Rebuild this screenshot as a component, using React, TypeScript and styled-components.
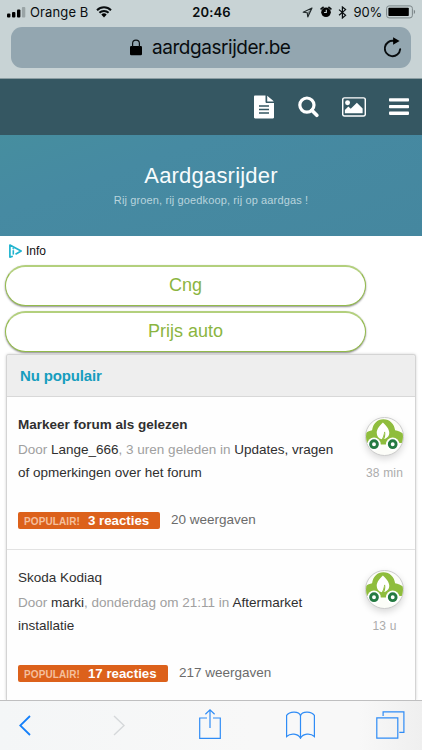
import React from 'react';
import styled, { createGlobalStyle } from 'styled-components';

const Global = createGlobalStyle`
  * { box-sizing: border-box; }
  html, body { margin: 0; padding: 0; background: #fff; }
  body { font-family: "Liberation Sans", Arial, sans-serif; overflow: hidden; }
  svg { display: block; flex: none; }
`;

const Phone = styled.div`
  width: 422px;
  height: 750px;
  display: flex;
  flex-direction: column;
  overflow: hidden;
  background: #fff;
`;

const BrowserTop = styled.header`
  flex: none;
  height: 79px;
  background: #c8d3d5;
  border-bottom: 1px solid #8b9da2;
  font-family: Inter, sans-serif;
  color: #090d0f;
`;

const StatusBar = styled.div`
  height: 27px;
  padding: 0 6px 3px 7px;
  display: grid;
  grid-template-columns: 1fr auto 1fr;
  align-items: center;
`;

const StatusSide = styled.div<{ $end?: boolean }>`
  display: flex;
  align-items: center;
  justify-content: ${p => (p.$end ? 'flex-end' : 'flex-start')};
`;

const StatusText = styled.span<{ $bold?: boolean; $spacing?: number }>`
  font-size: 13px;
  line-height: 16px;
  font-weight: ${p => (p.$bold ? 600 : 400)};
  letter-spacing: ${p => p.$spacing ?? 0}px;
  white-space: nowrap;
`;

const Gap = styled.span<{ $w: number }>`
  flex: none;
  width: ${p => p.$w}px;
`;

const AddressBar = styled.div`
  height: 41px;
  margin: 0 11px;
  padding: 0 9px 0 119px;
  border-radius: 11px;
  background: #93a6b0;
  display: flex;
  align-items: center;
`;

const Address = styled.span`
  flex: 1;
  margin-left: 10px;
  font-size: 19px;
  line-height: 24px;
  letter-spacing: -0.45px;
`;

const SiteNav = styled.nav`
  flex: none;
  height: 56px;
  padding: 0 13px 0 254px;
  background: #355762;
  display: flex;
  align-items: center;
  justify-content: space-between;
`;

const Hero = styled.section`
  flex: none;
  height: 101px;
  padding-top: 27px;
  background: linear-gradient(160deg, #468e9f 0%, #468aa2 30%, #45879f 100%);
  text-align: center;
`;

const SiteTitle = styled.h1`
  margin: 0;
  font-size: 22px;
  line-height: 27px;
  font-weight: 400;
  letter-spacing: 0.2px;
  color: #f8fcfd;
`;

const Tagline = styled.p`
  margin: 4px 0 0;
  font-size: 11px;
  line-height: 15px;
  letter-spacing: 0.13px;
  color: #b9d4dd;
`;

const AdBlock = styled.section`
  flex: none;
  height: 118px;
  padding: 0 0 0 5px;
`;

const AdInfo = styled.div`
  height: 29px;
  padding: 1px 0 0 4px;
  display: flex;
  align-items: center;
  gap: 4px;
  font-size: 12px;
  color: #111;
`;

const AdLink = styled.div`
  width: 361px;
  height: 41px;
  margin-bottom: 5px;
  border: 1px solid #93bb4b;
  border-width: 2px 1px 1px;
  border-top-color: #b3d07d;
  border-radius: 21px;
  box-shadow: 0 1px 2px rgba(0, 0, 0, 0.45);
  background: #fff;
  color: #8bb53f;
  font-size: 18px;
  line-height: 37px;
  text-align: center;
`;

const Card = styled.section`
  flex: 1;
  min-height: 0;
  overflow: hidden;
  margin: 0 6px 0 6px;
  border: 1px solid #d4d4d4;
  border-bottom: 0;
  border-radius: 3px 3px 0 0;
  box-shadow: 0 0 3px rgba(0, 0, 0, 0.18);
  background: #fefefe;
`;

const CardTitle = styled.h2`
  margin: 0;
  height: 42px;
  padding-left: 13px;
  border-bottom: 1px solid #d8d8d8;
  background: #eee;
  font-size: 15px;
  line-height: 42px;
  letter-spacing: -0.15px;
  color: #169dbe;
`;

const Topic = styled.article`
  height: 153px;
  padding: 17px 0 0 11px;
  display: grid;
  grid-template-columns: 330px 1fr;
  border-bottom: 1px solid #e2e2e2;
`;

const TopicTitle = styled.h3<{ $unread?: boolean }>`
  margin: 0 0 3px;
  font-size: 13.5px;
  line-height: 22px;
  font-weight: ${p => (p.$unread ? 700 : 400)};
  color: #303030;
`;

const Meta = styled.p`
  margin: 0;
  font-size: 13.5px;
  line-height: 22.5px;
  color: #a0a0a0;
  white-space: nowrap;
`;

const MetaLink = styled.span`
  color: #2f2f2f;
`;

const Stats = styled.div`
  margin-top: 28px;
  display: flex;
  align-items: center;
  gap: 11px;
  font-size: 13.5px;
  line-height: 17px;
  color: #6b6b6b;
`;

const Badge = styled.span<{ $w: number }>`
  width: ${p => p.$w}px;
  height: 17px;
  padding-left: 6px;
  border-radius: 2px;
  background: #dc611b;
  display: flex;
  align-items: baseline;
  gap: 8px;
  font-size: 13.3px;
  font-weight: 700;
  white-space: nowrap;
  color: #fff;
`;

const BadgeLabel = styled.span`
  font-size: 10px;
  letter-spacing: 0.1px;
  color: #f4bf9d;
`;

const Views = styled.span`
  margin-top: -2px;
`;

const Author = styled.div`
  padding: 3px 0 0 17px;
  width: 56px;
`;

const Avatar = styled.div`
  width: 39px;
  height: 39px;
  border: 1px solid #ccc;
  border-radius: 50%;
  overflow: hidden;
  background: #fcfdf8;
  box-shadow: 0 3px 7px rgba(0, 0, 0, 0.15);
`;

const Age = styled.div`
  width: 39px;
  margin-top: 9px;
  font-size: 12px;
  line-height: 16px;
  text-align: center;
  white-space: nowrap;
  letter-spacing: 0.2px;
  color: #acacac;
`;

const Toolbar = styled.footer`
  flex: none;
  height: 50px;
  padding: 0 17px 1px 19px;
  border-top: 1px solid #bfbfc0;
  background: linear-gradient(90deg, #f4f6f7 0%, #f8f8f8 60%, #f8f8f8 85%, #efefef 100%);
  display: flex;
  align-items: center;
`;

const Signal = () => (
  <svg width="19" height="12" viewBox="0 0 19 12">
    <rect x="0" y="7.4" width="3.4" height="4.2" rx="1" />
    <rect x="5" y="5.9" width="3.4" height="5.7" rx="1" />
    <rect x="10" y="3.6" width="3.4" height="8" rx="1" />
    <rect x="14.9" y="1" width="3.4" height="10.6" rx="1" fill="#9aa4a6" />
  </svg>
);

const Wifi = () => (
  <svg width="16" height="12" viewBox="0 0 16 12">
    <path d="M1 4.2a10 10 0 0 1 14 0M3.4 6.8a6.5 6.5 0 0 1 9.2 0" fill="none" stroke="currentColor" strokeWidth="2" />
    <path d="M5.3 8.6a3.8 3.8 0 0 1 5.4 0L8 11.4Z" />
  </svg>
);

const LocationArrow = () => (
  <svg width="11" height="11" viewBox="0 0 11 11">
    <path d="M10 1 1.2 5.3l4 .5.6 4.2L10 1Z" fill="none" stroke="#20282a" strokeWidth="1.1" strokeLinejoin="round" />
    <path d="M10 1 5.2 5.8l.6 4.2Z" fill="#20282a" opacity=".45" />
  </svg>
);

const Alarm = () => (
  <svg width="12" height="12" viewBox="0 0 12 12">
    <circle cx="6" cy="6.3" r="4.8" />
    <path d="M1.2 2.9 3 1.4M10.8 2.9 9 1.4" stroke="currentColor" strokeWidth="1.8" strokeLinecap="round" />
    <path d="M6.3 3.7v2.8H4.1" fill="none" stroke="#c8d3d5" strokeWidth="1.1" />
  </svg>
);

const Bluetooth = () => (
  <svg width="9" height="13" viewBox="0 0 9 13">
    <path d="m1 3.6 6.6 5.7-3.2 2.7V1l3.2 2.6L1 9.3" fill="none" stroke="currentColor" strokeWidth="1.2" />
  </svg>
);

const Battery = () => (
  <svg width="30" height="14" viewBox="0 0 30 14">
    <rect x=".6" y=".9" width="25.8" height="12" rx="2.5" fill="none" stroke="#7b8588" />
    <rect x="2.4" y="2.7" width="20.4" height="8.4" rx=".8" />
    <path d="M27.8 4.8c1.8.6 1.8 3.6 0 4.2Z" fill="#7b8588" />
  </svg>
);

const Lock = () => (
  <svg width="12" height="17" viewBox="0 0 12 17">
    <rect x="0" y="7" width="12" height="9.2" rx="1.3" />
    <path d="M2.6 8V4.5a3.4 3.4 0 0 1 6.8 0V8" fill="none" stroke="currentColor" strokeWidth="1.2" />
  </svg>
);

const Reload = () => (
  <svg width="18" height="21" viewBox="0 0 18 21">
    <path d="M10.2 4A7.7 7.7 0 1 0 16.2 12.2" fill="none" stroke="currentColor" strokeWidth="1.9" strokeLinecap="round" />
    <path d="m9.1.3 6.5 3.8-6.5 3.6Z" />
  </svg>
);

const DocumentIcon = () => (
  <svg width="20" height="24" viewBox="0 0 20 24" fill="#fff">
    <path d="M1.2.6h10.3v6.1c0 .9.5 1.3 1.3 1.3H20v14.2c0 .8-.4 1.2-1.2 1.2H1.2C.4 23.4 0 23 0 22.2V1.8C0 1 .4.6 1.2.6Z" />
    <path d="M13.2.8c.3.1.6.3.9.6l4.8 4.2c.4.4.6.6.7 1h-6.4Z" />
    <path d="M5 11.1h10M5 14.5h10M5 17.9h10" stroke="#355762" strokeWidth="1.5" />
  </svg>
);

const SearchIcon = () => (
  <svg width="22" height="22" viewBox="-1 0 22 22">
    <circle cx="8.9" cy="9.1" r="7.1" fill="none" stroke="#fff" strokeWidth="3.2" />
    <path d="m13.8 14.3 5 5" stroke="#fff" strokeWidth="3.6" strokeLinecap="round" />
  </svg>
);

const PictureIcon = () => (
  <svg width="24" height="20" viewBox="0.3 0 24.2 20">
    <rect x="1" y=".8" width="22.8" height="18.2" rx="1.8" fill="none" stroke="#fff" strokeWidth="1.5" />
    <circle cx="5.9" cy="5.8" r="2.5" fill="#fff" />
    <path d="M3.2 16.2v-3.1l3.5-3.5 2.4 2.2 6.2-6.2 5.8 5.8v4.8Z" fill="#fff" />
  </svg>
);

const MenuIcon = () => (
  <svg width="20" height="18" viewBox="0 0 20 18" fill="#fff">
    <rect y=".3" width="20" height="3.3" rx=".8" />
    <rect y="7" width="20" height="3.3" rx=".8" />
    <rect y="13.6" width="20" height="3.3" rx=".8" />
  </svg>
);

const AdChoices = () => (
  <svg width="13" height="14" viewBox="0 0 13 14" fill="none" stroke="#20b4cf">
    <path d="M3.8 12.2.9 13.1V1l11.2 6-5.6 3.3" strokeWidth="1.7" strokeLinejoin="round" />
    <path d="M4.3 6.2v4.4" strokeWidth="1.6" />
    <circle cx="4.3" cy="4.6" r=".6" fill="#20b4cf" strokeWidth=".5" />
  </svg>
);

const CarLogo = () => (
  <svg width="37" height="37" viewBox="0 0 37 37">
    <path d="M-1 25v-9.5c1.3-1.4 4.2-2.8 7.1-3.3C7 6 11 1.3 17.4 1.3S28.2 6 29.1 12.2c3.5.5 6.6 2 8.9 4.2V25H-1Z" fill="#8fbd3d" />
    <path d="M13.4 21.4h8L20 26.6h-6Z" fill="#8fbd3d" />
    <path d="M16.9 4.4c-3.4 3.6-6.2 6.6-6.2 10.3 0 3.3 1.8 5.8 5.1 6.6 1.2-2 1.8-3.9 2.1-6 .6 2-.1 4-.5 5.8 3.4-.4 5.9-2.9 5.9-6.4 0-3.7-3-6.7-6.4-10.3Z" fill="#fff" />
    <path d="M18.6 13.8c.7 3.3-.3 6.7-2.6 9.7" fill="none" stroke="#8fbd3d" strokeWidth="1.1" />
    <g fill="#fff">
      <circle cx="8" cy="26.2" r="6.7" />
      <circle cx="26.7" cy="26.2" r="6.7" />
    </g>
    <g fill="#fff" stroke="#247a42" strokeWidth="2.9">
      <circle cx="8" cy="26.2" r="3.4" />
      <circle cx="26.7" cy="26.2" r="3.4" />
    </g>
  </svg>
);

const Chevron = ({ forward = false }: { forward?: boolean }) => (
  <svg width="12" height="21" viewBox="0 0 12 21">
    <path
      d={forward ? 'm1 1 10 9.5L1 20' : 'M11 1 1.2 10.5 11 20'}
      fill="none"
      stroke={forward ? '#d5d8da' : '#1580fa'}
      strokeWidth={forward ? 1.4 : 1.8}
    />
  </svg>
);

const Share = () => (
  <svg width="22" height="32" viewBox="0 0 22 32" fill="none" stroke="#2f8cf6" strokeWidth="1.2">
    <path d="M8 9H.7v20.3h20.6V9H14M11 19V.9M6.4 5.2 11 .9l4.6 4.3" />
  </svg>
);

const Book = () => (
  <svg width="29" height="28" viewBox="0 0 29 28" fill="none" stroke="#2f8cf6" strokeWidth="1.2">
    <path d="M14.5 4.8C13 .1 3.8-.1.6 4.4v21.1c3.8-3.6 11.5-3.2 13.9 1.7 2.4-4.9 10.1-5.3 13.9-1.7V4.4C25.2-.1 16 .1 14.5 4.8v22.4" />
  </svg>
);

const Tabs = () => (
  <svg width="29" height="28" viewBox="0 0 29 28" fill="none" stroke="#2f8cf6" strokeWidth="1.2">
    <path d="M.8 6.8h21v20.4H.8ZM7.1 5V.8h20.8v20.5h-4.6" />
  </svg>
);

type TopicRowProps = {
  title: string;
  unread?: boolean;
  meta: React.ReactNode;
  replies: string;
  badgeWidth: number;
  views: string;
  age: string;
};

const TopicRow = ({ title, unread, meta, replies, badgeWidth, views, age }: TopicRowProps) => (
  <Topic>
    <div>
      <TopicTitle $unread={unread}>{title}</TopicTitle>
      <Meta>{meta}</Meta>
      <Stats>
        <Badge $w={badgeWidth}>
          <BadgeLabel>POPULAIR!</BadgeLabel>
          {replies}
        </Badge>
        <Views>{views}</Views>
      </Stats>
    </div>
    <Author>
      <Avatar><CarLogo /></Avatar>
      <Age>{age}</Age>
    </Author>
  </Topic>
);

export default function App() {
  return (
    <Phone>
      <Global />
      <BrowserTop>
        <StatusBar>
          <StatusSide>
            <Signal />
            <Gap $w={4} />
            <StatusText $spacing={0.12}>Orange B</StatusText>
            <Gap $w={7} />
            <Wifi />
          </StatusSide>
          <StatusText $bold $spacing={0.15}>20:46</StatusText>
          <StatusSide $end>
            <LocationArrow />
            <Gap $w={7} />
            <Alarm />
            <Gap $w={6} />
            <Bluetooth />
            <Gap $w={7} />
            <StatusText $spacing={-0.2}>90%</StatusText>
            <Gap $w={4} />
            <Battery />
          </StatusSide>
        </StatusBar>
        <AddressBar>
          <Lock />
          <Address>aardgasrijder.be</Address>
          <Reload />
        </AddressBar>
      </BrowserTop>
      <SiteNav>
        <DocumentIcon />
        <SearchIcon />
        <PictureIcon />
        <MenuIcon />
      </SiteNav>
      <Hero>
        <SiteTitle>Aardgasrijder</SiteTitle>
        <Tagline>Rij groen, rij goedkoop, rij op aardgas !</Tagline>
      </Hero>
      <AdBlock>
        <AdInfo><AdChoices />Info</AdInfo>
        <AdLink>Cng</AdLink>
        <AdLink>Prijs auto</AdLink>
      </AdBlock>
      <Card>
        <CardTitle>Nu populair</CardTitle>
        <TopicRow
          title="Markeer forum als gelezen"
          unread
          meta={
            <>
              Door <MetaLink>Lange_666</MetaLink>, 3 uren geleden in <MetaLink>Updates, vragen<br />of opmerkingen over het forum</MetaLink>
            </>
          }
          replies="3 reacties"
          badgeWidth={142}
          views="20 weergaven"
          age="38 min"
        />
        <TopicRow
          title="Skoda Kodiaq"
          meta={
            <>
              Door <MetaLink>marki</MetaLink>, donderdag om 21:11 in <MetaLink>Aftermarket<br />installatie</MetaLink>
            </>
          }
          replies="17 reacties"
          badgeWidth={150}
          views="217 weergaven"
          age="13 u"
        />
      </Card>
      <Toolbar>
        <Chevron />
        <Gap $w={82} />
        <Chevron forward />
        <Gap $w={74} />
        <Share />
        <Gap $w={65} />
        <Book />
        <Gap $w={61} />
        <Tabs />
      </Toolbar>
    </Phone>
  );
}
